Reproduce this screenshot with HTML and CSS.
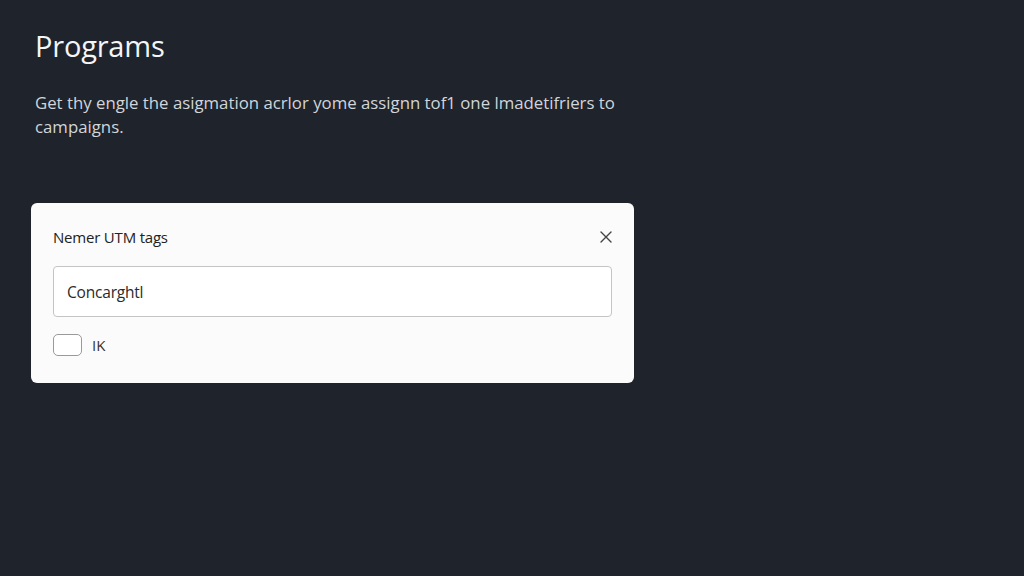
FILE: index.html
```html
<!DOCTYPE html>
<html lang="en">
<head>
<meta charset="utf-8">
<title>Programs</title>
<link rel="stylesheet" href="styles.css">
</head>
<body>
<main class="page">
  <h1 class="title">Programs</h1>
  <p class="desc">Get thy engle the asigmation acrlor yome assignn tof1 one lmadetifriers to campaigns.</p>
  <section class="card">
    <div class="card-head">
      <span class="card-title">Nemer UTM tags</span>
      <button class="close" aria-label="Close">
        <svg width="12" height="12" viewBox="0 0 12 12"><path d="M1 1L11 11M11 1L1 11" stroke="#444" stroke-width="1.4" fill="none" stroke-linecap="round"/></svg>
      </button>
    </div>
    <div class="field">Concarghtl</div>
    <label class="check">
      <span class="box"></span>
      <span class="check-label">IK</span>
    </label>
  </section>
</main>
</body>
</html>
```
FILE: styles.css
```css
html, body {
  margin: 0;
  padding: 0;
  background: #1e232c;
  height: 100%;
}
body {
  font-family: "Open Sans", "Liberation Sans", sans-serif;
}
.page {
  padding: 26px 31px 0 31px;
  width: 604px;
}
.title {
  margin: 0 0 0 4px;
  font-size: 29px;
  font-weight: 400;
  line-height: 40px;
  color: #f4f5f7;
  letter-spacing: -0.2px;
}
.desc {
  margin: 25px 0 0 4px;
  font-size: 16.8px;
  line-height: 24px;
  color: #d2d5da;
  letter-spacing: 0;
  width: 610px;
}
.card {
  margin-top: 64px;
  background: #fbfbfb;
  border-radius: 6px;
  padding: 22px 22px 27px 22px;
  width: 559px;
}
.card-head {
  display: flex;
  align-items: center;
  justify-content: space-between;
  height: 24px;
}
.card-title {
  font-size: 15px;
  color: #222;
  letter-spacing: -0.2px;
}
.close {
  background: none;
  border: 0;
  padding: 0;
  margin-right: -1px;
  width: 14px;
  height: 14px;
  display: flex;
  align-items: center;
  justify-content: center;
}
.field {
  margin-top: 17px;
  margin-left: 0;
  width: 544px;
  height: 49px;
  border: 1px solid #c4c4c4;
  border-radius: 4px;
  background: #fff;
  display: flex;
  align-items: center;
  padding-left: 13px;
  font-size: 15.5px;
  color: #2a2a2a;
  letter-spacing: -0.2px;
}
.check {
  margin-top: 17px;
  display: flex;
  align-items: center;
  gap: 10px;
}
.box {
  width: 27px;
  height: 20px;
  border: 1px solid #9a9a9a;
  border-radius: 5px;
  background: #fff;
}
.check-label {
  font-size: 15px;
  color: #333;
}
```
